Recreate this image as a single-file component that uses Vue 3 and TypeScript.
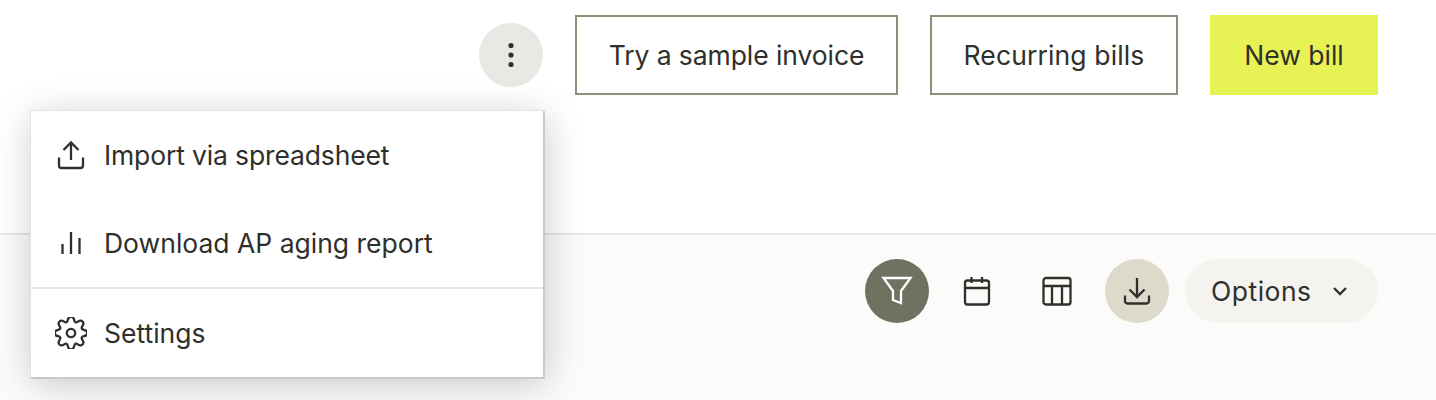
<template>
  <div class="page">
    <header class="top-bar">
      <button class="round more" type="button" aria-label="More">
        <svg width="32" height="32" viewBox="0 0 32 32"><circle cx="16" cy="6.5" r="2.6" /><circle cx="16" cy="16" r="2.6" /><circle cx="16" cy="25.5" r="2.6" /></svg>
      </button>
      <button class="btn outline sample" type="button">Try a sample invoice</button>
      <button class="btn outline recurring" type="button">Recurring bills</button>
      <button class="btn primary" type="button">New bill</button>
    </header>

    <section class="tool-bar">
      <button class="round filter" type="button" aria-label="Filter">
        <svg class="icon" viewBox="0 0 32 32"><path d="M2.5 3h27L20 16v12l-8-3V16z" /></svg>
      </button>
      <button class="round" type="button" aria-label="Calendar">
        <svg class="icon" viewBox="0 0 32 32"><rect x="4" y="5.5" width="24" height="24" rx="2.5" /><path d="M4 13h24M10.5 2v6M21 2v6" /></svg>
      </button>
      <button class="round" type="button" aria-label="Columns">
        <svg class="icon" viewBox="0 0 32 32"><rect x="2.5" y="3" width="27" height="26.5" rx="2.5" /><path d="M2.5 11h27M11 11v18.5M21 11v18.5" /></svg>
      </button>
      <button class="round download" type="button" aria-label="Download">
        <svg class="icon" viewBox="0 0 32 32"><path d="M16 3v19M8.500 14.500 16 22l7.500-7.500M4 20.500v5.500A2.500 2.500 0 0 0 6.500 28.500h19a2.500 2.500 0 0 0 2.500-2.500v-5.500" /></svg>
      </button>
      <button class="options" type="button">
        Options
        <svg width="16" height="10" viewBox="0 0 16 10"><path d="M2 2l6 6 6-6" /></svg>
      </button>
    </section>

    <nav class="menu">
      <div class="menu-group">
        <a class="menu-item tight">
          <svg class="icon" viewBox="0 0 32 32"><path d="M16 21V3.500M8.500 11 16 3.500 23.500 11M4 18.500v8A2.500 2.500 0 0 0 6.500 29h19a2.500 2.500 0 0 0 2.500-2.500v-8" /></svg>
          Import via spreadsheet
        </a>
        <a class="menu-item">
          <svg class="icon" viewBox="0 0 32 32"><path d="M7.500 17v10M16 5v22M24.500 11v16" /></svg>
          Download AP aging report
        </a>
      </div>
      <div class="menu-group last">
        <a class="menu-item">
          <svg class="icon" viewBox="0 0 32 32"><circle cx="16" cy="16" r="4.200" /><path :d="gearPath" /></svg>
          Settings
        </a>
      </div>
    </nav>
  </div>
</template>

<script setup lang="ts">
// eight lobed gear, corners rounded through the midpoints
const polar = (deg: number, r: number): [number, number] => {
  const a = (deg * Math.PI) / 180
  return [16 + r * Math.cos(a), 16 + r * Math.sin(a)]
}

const points: [number, number][] = []
for (let i = 0; i < 8; i++) {
  const a = i * 45 - 90
  points.push(polar(a - 9, 16.5), polar(a + 9, 16.5), polar(a + 22.5, 10.2))
}

const mid = (p: [number, number], q: [number, number]) =>
  `${((p[0] + q[0]) / 2).toFixed(2)} ${((p[1] + q[1]) / 2).toFixed(2)}`

const gearPath =
  `M${mid(points[0], points[1])}` +
  points
    .map((p, i) => {
      const next = points[(i + 2) % points.length]
      const cur = points[(i + 1) % points.length]
      return `Q${cur[0].toFixed(2)} ${cur[1].toFixed(2)} ${mid(cur, next)}`
    })
    .join('') +
  'z'
</script>

<style>
html,
body {
  margin: 0;
  background: #fff;
}
</style>

<style scoped>
.page {
  position: relative;
  width: 1436px;
  height: 400px;
  overflow: hidden;
  background: #fcfbf9;
  color: #2f2f2b;
  font-family: Inter, "Liberation Sans", sans-serif;
  font-size: 26.5px;
}
button {
  font: inherit;
  color: inherit;
  border: 0;
  padding: 0;
  cursor: pointer;
}
.top-bar {
  display: flex;
  align-items: flex-start;
  justify-content: flex-end;
  gap: 32px;
  box-sizing: border-box;
  height: 235px;
  padding: 15px 58px 0 0;
  background: #fff;
  border-bottom: 2px solid #e6e6e3;
}
.round {
  display: flex;
  align-items: center;
  justify-content: center;
  flex: none;
  width: 64px;
  height: 64px;
  border-radius: 50%;
  background: transparent;
}
.more {
  margin-top: 8px;
  background: #e9e8e5;
}
.more circle {
  fill: #2f2f2b;
}
.btn {
  height: 80px;
  box-sizing: border-box;
  white-space: nowrap;
}
.outline {
  background: #fff;
  border: 2px solid #8f8e78;
}
.sample {
  width: 323px;
  letter-spacing: -0.08px;
}
.recurring {
  width: 248px;
  letter-spacing: 0.13px;
}
.primary {
  width: 168px;
  background: #e7f255;
}
.tool-bar {
  display: flex;
  justify-content: flex-end;
  gap: 16px;
  padding: 24px 58px 0 0;
}
.icon {
  width: 32px;
  height: 32px;
  flex: none;
  fill: none;
  stroke: #2f2f2b;
  stroke-width: 2.3;
}
.filter {
  background: #717162;
}
.filter .icon {
  stroke: #fff;
}
.download {
  background: #dbdacb;
}
.options {
  display: flex;
  align-items: center;
  gap: 20px;
  box-sizing: border-box;
  width: 193px;
  height: 64px;
  padding-left: 26px;
  border-radius: 32px;
  background: #f4f3ef;
  letter-spacing: 0.5px;
}
.options svg {
  fill: none;
  stroke: #2f2f2b;
  stroke-width: 2.3;
}
.menu {
  position: absolute;
  top: 111px;
  left: 31px;
  width: 512px;
  height: 266px;
  background: #fff;
  box-shadow: 1px 1px 0 1px #c9c9c6, 0 0 0 1px #e2e2df, 2px 6px 36px rgba(0, 0, 0, 0.22);
}
.menu-group {
  display: flex;
  flex-direction: column;
  border-bottom: 2px solid #e6e6e3;
}
.menu-group.last {
  border-bottom: 0;
}
.menu-item {
  display: flex;
  align-items: center;
  gap: 17px;
  height: 88px;
  padding-left: 24px;
  white-space: nowrap;
}
.tight {
  letter-spacing: -0.14px;
}
</style>
